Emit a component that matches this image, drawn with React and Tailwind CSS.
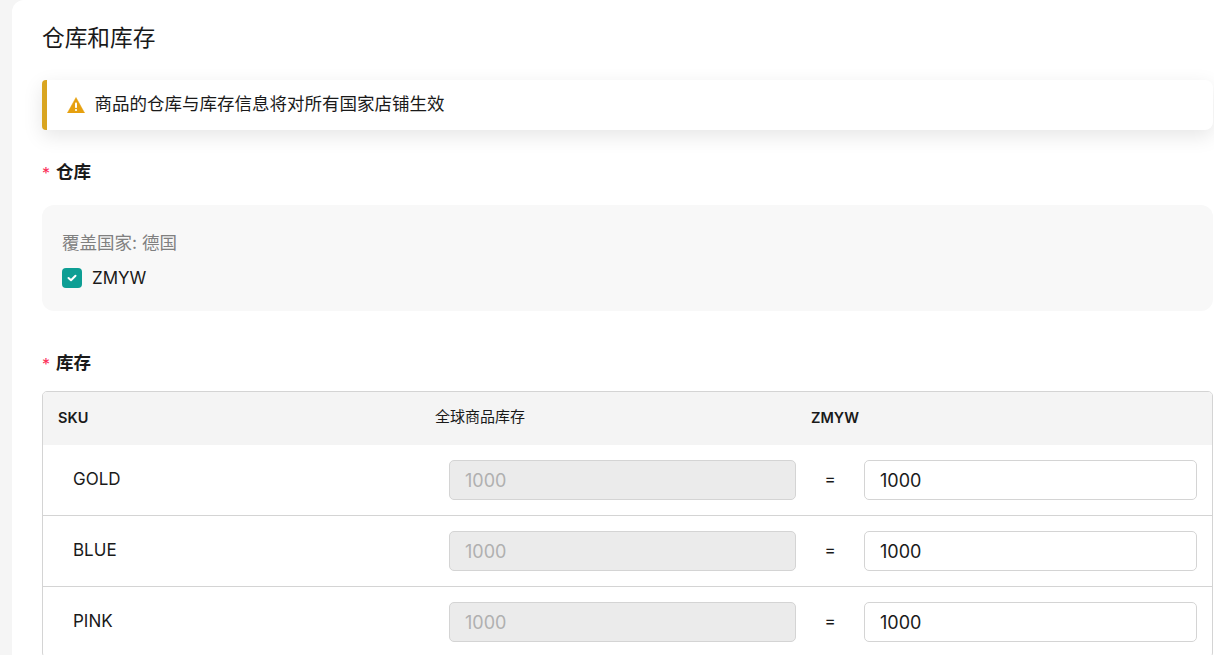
import React from "react";

const ROWS = ["GOLD", "BLUE", "PINK"];

function SectionLabel({ children }) {
  return (
    <div className="flex h-6 items-start text-[17.5px] leading-[24px] font-bold text-[#1a1a1a]">
      <span className="w-[14px] pt-[3px] text-[16px] leading-[21px] font-normal text-[#fb2c56]">*</span>
      <span>{children}</span>
    </div>
  );
}

function WarnIcon() {
  return (
    <svg width="18" height="16" viewBox="0 0 18 16" className="shrink-0">
      <path d="M9 0.5 L17.6 16 L0.4 16 Z" fill="#e6a00f" stroke="#e6a00f" strokeLinejoin="round" strokeWidth="0.5" />
      <rect x="8" y="5.5" width="2" height="5.5" rx="0.8" fill="#fff" />
      <circle cx="9" cy="13" r="1.1" fill="#fff" />
    </svg>
  );
}

function StockRow({ sku, first }) {
  return (
    <div className={first ? "flex h-[70px] items-center" : "flex h-[71px] items-center border-t border-[#d4d4d4]"}>
      <div className="w-[377px] pl-[30px] text-[17px]">{sku}</div>
      <div className="w-[376px] pl-[29px]">
        <input
          disabled
          value="1000"
          readOnly
          className="h-10 w-full rounded-[5px] border border-[#d4d4d4] bg-[#ebebeb] px-[15px] text-[18px] text-[#b0b0b0] outline-none"
        />
      </div>
      <div className="flex flex-1 items-center pr-[15px]">
        <span className="w-[68px] text-center text-[17px]">=</span>
        <input
          value="1000"
          readOnly
          className="h-10 flex-1 rounded-[5px] border border-[#d4d4d4] bg-white px-[15px] text-[18px] outline-none"
        />
      </div>
    </div>
  );
}

export default function App() {
  return (
    <div
      className="h-[655px] overflow-hidden bg-[#f5f5f5] pl-3 text-[17.5px] text-[#1a1a1a]"
      style={{ fontFamily: 'Inter, "Noto Sans CJK SC", sans-serif' }}
    >
      <div className="h-full rounded-tl-xl bg-white pl-[30px] pr-px pt-[22px]">
        <h2 className="text-[22.7px] leading-[32px] font-normal">仓库和库存</h2>

        {/* Alert */}
        <div className="mt-[26px] flex h-[50px] items-center gap-[9.5px] rounded-l-[4px] rounded-r-lg border-l-[5px] border-[#d9a520] bg-white pl-5 shadow-[0_6px_20px_rgba(0,0,0,0.1)]">
          <WarnIcon />
          <span className="pb-[2px]">商品的仓库与库存信息将对所有国家店铺生效</span>
        </div>

        <div className="mt-[30px]">
          <SectionLabel>仓库</SectionLabel>
        </div>
        <div className="mt-[21px] h-[106px] rounded-xl bg-[#f8f8f8] px-5 pt-[26px]">
          <div className="text-[#808080] leading-6">覆盖国家: 德国</div>
          <div className="mt-[11px] flex items-center gap-[10px] leading-6">
            <span className="flex h-5 w-5 items-center justify-center rounded bg-[#0d9e94]">
              <svg width="10" height="8" viewBox="0 0 10 8" fill="none">
                <path d="M1.5 4 L4 6.3 L8.5 1.7" stroke="#fff" strokeWidth="2" strokeLinecap="round" strokeLinejoin="round" />
              </svg>
            </span>
            <span className="text-[17px]">ZMYW</span>
          </div>
        </div>

        <div className="mt-10">
          <SectionLabel>库存</SectionLabel>
        </div>

        {/* Stock table */}
        <div className="mt-4 overflow-hidden rounded-[5px] border border-[#d4d4d4]">
          <div className="flex h-[53px] items-center bg-[#f4f4f4] pb-[2px] text-[15px]">
            <div className="w-[377px] pl-[15px] text-[14.5px] font-semibold">SKU</div>
            <div className="w-[376px] pl-[15px]">全球商品库存</div>
            <div className="flex-1 pl-[15px] text-[14.5px] font-semibold">ZMYW</div>
          </div>
          {ROWS.map((sku, i) => (
            <StockRow key={sku} sku={sku} first={i === 0} />
          ))}
        </div>
      </div>
    </div>
  );
}
